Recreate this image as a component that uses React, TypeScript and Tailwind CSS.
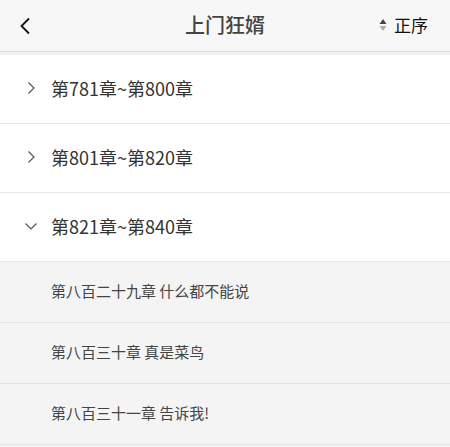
import React from "react";

const font = { fontFamily: '"Noto Sans CJK SC", "Noto Sans", sans-serif' };

function Chevron({ open }: { open: boolean }) {
  return open ? (
    <svg width="14" height="14" viewBox="0 0 14 14" className="shrink-0">
      <path d="M1.5 4.5 L7 10 L12.5 4.5" fill="none" stroke="#555" strokeWidth="1.2" />
    </svg>
  ) : (
    <svg width="14" height="14" viewBox="0 0 14 14" className="shrink-0">
      <path d="M4.5 1.5 L10 7 L4.5 12.5" fill="none" stroke="#555" strokeWidth="1.2" />
    </svg>
  );
}

export default function App() {
  const sections = [
    { title: "第781章~第800章", open: false },
    { title: "第801章~第820章", open: false },
    { title: "第821章~第840章", open: true },
  ];
  const chapters = ["第八百二十九章 什么都不能说", "第八百三十章 真是菜鸟", "第八百三十一章 告诉我!"];
  return (
    <div className="w-[450px] h-[447px] overflow-hidden bg-[#f4f4f4]" style={font}>
      <div className="h-[52px] bg-[#f7f7f7] border-b border-[#dcdcdc] flex items-center">
        <div className="w-[100px] flex items-center pl-[19px]">
          <svg width="12" height="18" viewBox="0 0 12 18">
            <path d="M10 1.5 L2.5 9 L10 16.5" fill="none" stroke="#111" strokeWidth="1.8" />
          </svg>
        </div>
        <div className="flex-1 text-center text-[20px] font-medium text-[#444] leading-none pb-[2px]">上门狂婿</div>
        <div className="w-[100px] flex items-center justify-end pr-[22px] gap-[7px] pb-[2px]">
          <svg width="8" height="14" viewBox="0 0 8 14">
            <path d="M4 1 L7.5 6 L0.5 6 Z" fill="#444" />
            <path d="M4 13 L7.5 8 L0.5 8 Z" fill="#aaa" />
          </svg>
          <span className="text-[17px] text-[#111] leading-none">正序</span>
        </div>
      </div>
      <div className="h-[3px] bg-[#f2f2f2]" />
      {sections.map((s) => (
        <div key={s.title} className="h-[69px] bg-white border-b border-[#e6e6e6] flex items-center pl-[24px] gap-[13px] pb-[3px]">
          <Chevron open={s.open} />
          <span className="text-[18px] text-[#333] leading-none">{s.title}</span>
        </div>
      ))}
      {chapters.map((c) => (
        <div key={c} className="h-[61px] bg-[#f4f4f4] border-b border-[#e3e3e3] flex items-center pl-[51px] pb-[4px]">
          <span className="text-[15px] text-[#444] leading-none">{c}</span>
        </div>
      ))}
    </div>
  );
}
